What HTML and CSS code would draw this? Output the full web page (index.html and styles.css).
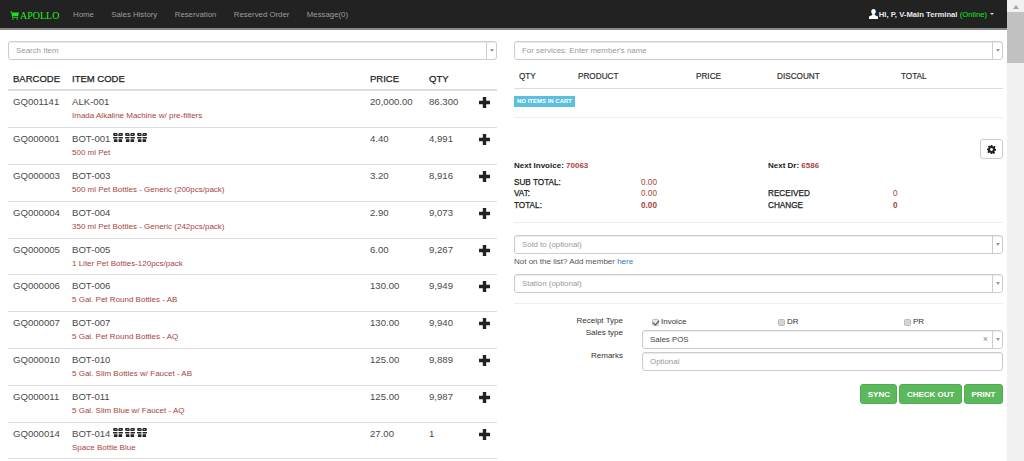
FILE: index.html
```html
<!DOCTYPE html>
<html lang="en">
<head>
<meta charset="utf-8">
<title>Apollo</title>
<link rel="stylesheet" href="styles.css">
</head>
<body>
<svg class="defs" width="0" height="0" aria-hidden="true">
  <symbol id="gift" viewBox="0 0 12 11">
    <path d="M1.200 0h2.800q1.500 0 1.500 1.500V3.800H2Q0 3.800 0 2V1.200Q0 0 1.200 0zM8 0h2.800Q12 0 12 1.200V2q0 1.800-2 1.800H6.500V1.500Q6.500 0 8 0zM0 5h5.300v1.700H0zM6.700 5H12v1.700H6.700zM1 7.700h4.300V11H1zM6.700 7.700H11V11H6.700z" fill="#222"/>
    <path d="M2 1.300h2v1.200H2zM8 1.300h2v1.200H8z" fill="#999"/>
  </symbol>
  <symbol id="plus" viewBox="0 0 11 11">
    <path d="M3.800 0h3.400v3.800H11v3.400H7.200V11H3.800V7.200H0V3.800h3.800z" fill="#222"/>
  </symbol>
</svg>
<div class="app">
  <div class="page">
    <nav class="navbar">
      <a class="brand">
        <svg class="cart" width="9" height="9" viewBox="0 0 12 11"><path d="M0 0h2.400l.5 1.400H12l-1.200 5H3.600l.3 1.200h7v1H3L1.600 1H0z" fill="#19e619"/><circle cx="4" cy="10" r="1" fill="#19e619"/><circle cx="9.600" cy="10" r="1" fill="#19e619"/></svg><span>APOLLO</span>
      </a>
      <ul class="nav">
        <li>Home</li>
        <li>Sales History</li>
        <li>Reservation</li>
        <li>Reserved Order</li>
        <li>Message(0)</li>
      </ul>
      <div class="user">
        <svg width="9" height="10" viewBox="0 0 10 11"><path d="M5 0c1.600 0 2.500 1.100 2.500 2.700 0 1.200-.5 2.200-1.100 2.800v1L10 8.200V11H0V8.200l3.600-1.700v-1C3 4.900 2.500 3.900 2.500 2.700 2.500 1.100 3.400 0 5 0z" fill="#fff"/></svg>
        <span>HI, P, V-Main Terminal <em>(Online)</em></span><i class="caret"></i>
      </div>
    </nav>
    <main class="main">
      <section class="left">
        <div class="select"><span>Search Item</span><b class="arrow"></b></div>
        <table class="items">
          <thead><tr><th class="c1">BARCODE</th><th class="c2">ITEM CODE</th><th class="c3">PRICE</th><th class="c4">QTY</th><th class="c5"></th></tr></thead>
          <tbody>
            <tr><td>GQ001141</td><td>ALK-001<small>Imada Alkaline Machine w/ pre-filters</small></td><td>20,000.00</td><td>86.300</td><td><svg class="add"><use href="#plus"/></svg></td></tr>
            <tr><td>GQ000001</td><td>BOT-001 <svg class="gift"><use href="#gift"/></svg><svg class="gift"><use href="#gift"/></svg><svg class="gift"><use href="#gift"/></svg><small>500 ml Pet</small></td><td>4.40</td><td>4,991</td><td><svg class="add"><use href="#plus"/></svg></td></tr>
            <tr><td>GQ000003</td><td>BOT-003<small>500 ml Pet Bottles - Generic (200pcs/pack)</small></td><td>3.20</td><td>8,916</td><td><svg class="add"><use href="#plus"/></svg></td></tr>
            <tr><td>GQ000004</td><td>BOT-004<small>350 ml Pet Bottles - Generic (242pcs/pack)</small></td><td>2.90</td><td>9,073</td><td><svg class="add"><use href="#plus"/></svg></td></tr>
            <tr><td>GQ000005</td><td>BOT-005<small>1 Liter Pet Bottles-120pcs/pack</small></td><td>6.00</td><td>9,267</td><td><svg class="add"><use href="#plus"/></svg></td></tr>
            <tr><td>GQ000006</td><td>BOT-006<small>5 Gal. Pet Round Bottles - AB</small></td><td>130.00</td><td>9,949</td><td><svg class="add"><use href="#plus"/></svg></td></tr>
            <tr><td>GQ000007</td><td>BOT-007<small>5 Gal. Pet Round Bottles - AQ</small></td><td>130.00</td><td>9,940</td><td><svg class="add"><use href="#plus"/></svg></td></tr>
            <tr><td>GQ000010</td><td>BOT-010<small>5 Gal. Slim Bottles w/ Faucet - AB</small></td><td>125.00</td><td>9,889</td><td><svg class="add"><use href="#plus"/></svg></td></tr>
            <tr><td>GQ000011</td><td>BOT-011<small>5 Gal. Slim Blue w/ Faucet - AQ</small></td><td>125.00</td><td>9,987</td><td><svg class="add"><use href="#plus"/></svg></td></tr>
            <tr><td>GQ000014</td><td>BOT-014 <svg class="gift"><use href="#gift"/></svg><svg class="gift"><use href="#gift"/></svg><svg class="gift"><use href="#gift"/></svg><small>Space Bottle Blue</small></td><td>27.00</td><td>1</td><td><svg class="add"><use href="#plus"/></svg></td></tr>
          </tbody>
        </table>
      </section>
      <section class="right">
        <div class="select"><span>For services: Enter member's name</span><b class="arrow"></b></div>
        <div class="cart-head"><span>QTY</span><span>PRODUCT</span><span>PRICE</span><span>DISCOUNT</span><span>TOTAL</span></div>
        <div class="cart-body"><span class="badge">NO ITEMS IN CART</span></div>
        <div class="gear-row">
          <button class="gear" aria-label="Settings">
            <svg width="9" height="9" viewBox="0 0 16 16"><path fill-rule="evenodd" d="M6.500 0h3l.4 2.200 1.400.6L13.200 1.500l2.100 2.100L14 5.500l.6 1.400L16 7v3l-2.200.4-.6 1.400 1.300 1.900-2.100 2.100-1.900-1.300-1.400.6L9.500 16h-3l-.4-2.200-1.400-.6-1.900 1.300L.7 12.400 2 10.500l-.6-1.400L0 9.500v-3l2.200-.4.600-1.400L1.500 2.800 3.600.7l1.900 1.300 1.400-.6zM8 5.500a2.500 2.500 0 1 0 0 5 2.500 2.500 0 0 0 0-5z" fill="#222"/></svg>
          </button>
        </div>
        <div class="next">
          <p><b>Next Invoice:</b> <span class="red bold">70063</span></p>
          <p><b>Next Dr:</b> <span class="red bold">6586</span></p>
        </div>
        <div class="totals">
          <span class="k">SUB TOTAL:</span><span class="red">0.00</span><span></span><span></span>
          <span class="k">VAT:</span><span class="red">0.00</span><span class="k">RECEIVED</span><span class="red">0</span>
          <span class="k">TOTAL:</span><span class="red bold">0.00</span><span class="k">CHANGE</span><span class="red bold">0</span>
        </div>
        <div class="select sold"><span>Sold to (optional)</span><b class="arrow"></b></div>
        <p class="hint">Not on the list? Add member <a>here</a></p>
        <div class="select station"><span>Station (optional)</span><b class="arrow"></b></div>
        <div class="form">
          <label class="lbl receipt">Receipt Type</label>
          <div class="checks">
            <label><input type="checkbox" checked> Invoice</label>
            <label><input type="checkbox"> DR</label>
            <label><input type="checkbox"> PR</label>
          </div>
          <label class="lbl tight">Sales type</label>
          <div class="select value"><span>Sales POS</span><i class="clear">×</i><b class="arrow"></b></div>
          <label class="lbl remarks">Remarks</label>
          <div class="select input"><span>Optional</span></div>
        </div>
        <div class="actions"><button>SYNC</button><button>CHECK OUT</button><button>PRINT</button></div>
      </section>
    </main>
  </div>
  <aside class="scrollbar"><i class="up"></i><div class="thumb"></div></aside>
</div>
</body>
</html>
```
FILE: styles.css
```css
* { box-sizing: border-box; }
html, body { margin: 0; height: 461px; overflow: hidden; }
body { font-family: "Liberation Sans", Arial, sans-serif; font-size: 9px; color: #333; background: #fff; }
.defs { position: absolute; }
.app { display: flex; height: 461px; }
.page { flex: 1; min-width: 0; overflow: hidden; }
.scrollbar { width: 17px; background: #f1f1f1; display: flex; flex-direction: column; align-items: center; }
.up { width: 0; height: 0; margin: 5px 0 3px; border: 3px solid transparent; border-top: 0; border-bottom: 4px solid #a3a3a3; }
.thumb { width: 100%; height: 51px; background: #c1c1c1; }

.navbar { height: 30px; display: flex; align-items: center; background: #222; border-bottom: 2px solid #8a8a8a; padding: 0 8px 0 10px; color: #9d9d9d; }
.brand { display: flex; align-items: center; font-family: "Liberation Serif", serif; font-size: 10px; color: #19f019; width: 63px; padding-top: 2px; }
.cart { margin-right: 1px; }
.nav { display: flex; list-style: none; margin: 0; padding: 0; gap: 17.500px; font-size: 7.800px; }
.user { margin-left: auto; margin-right: 5px; display: flex; align-items: center; gap: 1px; font-size: 7.700px; font-weight: bold; color: #e8e8e8; white-space: pre; }
.user em { font-style: normal; color: #19e619; font-weight: normal; }
.caret { width: 0; height: 0; margin-left: 2px; border: 2px solid transparent; border-bottom: 0; border-top: 2px solid #ddd; }

.main { display: grid; grid-template-columns: 489px 489px; column-gap: 17px; padding: 11px 4px 0 8px; }

.select { position: relative; height: 19px; display: flex; align-items: center; padding-left: 7px; border: 1px solid #ccc; border-radius: 3px; box-shadow: inset 0 1px 1px rgba(0,0,0,.08); color: #999; font-size: 7.900px; background: #fff; }
.arrow { position: absolute; right: 0; top: 0; bottom: 0; width: 10px; border-left: 1px solid #ccc; }
.arrow::after { content: ""; position: absolute; left: 3px; top: 7px; border: 2px solid transparent; border-bottom: 0; border-top: 3px solid #999; }

.items { width: 489px; border-collapse: collapse; table-layout: fixed; }
.items th { height: 30px; padding: 7px 0 0 5px; text-align: left; font-size: 9.500px; font-weight: normal; color: #222; -webkit-text-stroke: .25px #222; border-bottom: 2px solid #ddd; }
.items td { height: 36.800px; padding: 4px 0 0 5px; vertical-align: top; font-size: 9.600px; line-height: 14px; color: #4a4a4a; border-bottom: 1px solid #ddd; }
.items tbody tr:first-child td { height: 37.800px; }
.items small { display: block; margin-top: 1px; font-size: 8px; line-height: 12px; color: #a94442; white-space: nowrap; }
.c1 { width: 59px; }
.c2 { width: 298px; }
.c3 { width: 59px; }
.c4 { width: 45px; }
.gift { width: 10px; height: 9px; margin-right: 2px; }
.add { width: 11px; height: 11px; margin: 2px 0 0 5px; display: block; }

.cart-head { height: 29px; padding-top: 12px; display: grid; grid-template-columns: 59px 118px 81px 124px 1fr; padding-left: 5px; font-size: 8.200px; color: #333; -webkit-text-stroke: .2px #333; border-bottom: 1px solid #ddd; }
.cart-body { height: 29px; padding-top: 7px; border-bottom: 1px solid #eee; }
.badge { display: block; width: 61px; height: 11px; line-height: 11px; text-align: center; background: #5bc0de; color: #fff; font-size: 6px; font-weight: bold; white-space: nowrap; }
.gear-row { display: flex; justify-content: flex-end; padding-top: 21px; }
.gear { width: 23px; height: 20px; padding: 0; display: flex; align-items: center; justify-content: center; background: #fff; border: 1px solid #ccc; border-radius: 3px; }
.next { display: grid; grid-template-columns: 254px 1fr; margin-top: 1px; font-size: 8px; color: #222; }
.next p { margin: 0; line-height: 12px; }
.red { color: #a94442; }
.bold { font-weight: bold; }
.totals { display: grid; grid-template-columns: 127px 127px 125px 1fr; grid-auto-rows: 11.400px; margin-top: 5px; padding-bottom: 11.300px; border-bottom: 1px solid #eee; font-size: 8.200px; line-height: 11.400px; }
.k { font-weight: normal; color: #222; -webkit-text-stroke: .25px #222; }
.sold { margin-top: 12px; }
.hint { margin: 0; padding-top: 2px; height: 20px; font-size: 8px; line-height: 12px; color: #555; }
.hint a { color: #337ab7; }
.form { display: grid; grid-template-columns: 128px 361px; margin-top: 10px; padding-top: 11px; border-top: 1px solid #eee; }
.lbl { font-size: 8px; line-height: 12px; padding-right: 19px; text-align: right; color: #333; }
.receipt { height: 15px; }
.tight { margin-top: -3px; }
.remarks { margin-top: 1px; }
.checks { display: grid; grid-template-columns: 126px 126px 1fr; padding-left: 10px; height: 15px; font-size: 8px; line-height: 12px; }
.checks label { display: flex; align-items: center; gap: 2px; height: 12px; margin-top: 1px; }
.checks input { appearance: none; position: relative; width: 7px; height: 7px; margin: 0; background: #d4d4d4; border: 1px solid #bbb; border-radius: 1.500px; }
.checks input:checked { background: #e6e6e6; }
.checks input:checked::after { content: ""; position: absolute; left: 1px; top: -1px; width: 3px; height: 5px; border: solid #444; border-width: 0 1.300px 1.300px 0; transform: rotate(40deg); }
.value { color: #444; }
.value span { flex: 1; }
.clear { position: absolute; right: 14px; top: 3px; font-style: normal; font-size: 9px; line-height: 11px; color: #888; }
.input { margin-top: 3px; }
.actions { display: flex; justify-content: flex-end; gap: 2px; margin-top: 13px; }
.actions button { height: 20px; padding: 0 6.500px; background: #5cb85c; color: #fff; border: 1px solid #4cae4c; border-radius: 3px; font: bold 8px "Liberation Sans", Arial, sans-serif; }
```
